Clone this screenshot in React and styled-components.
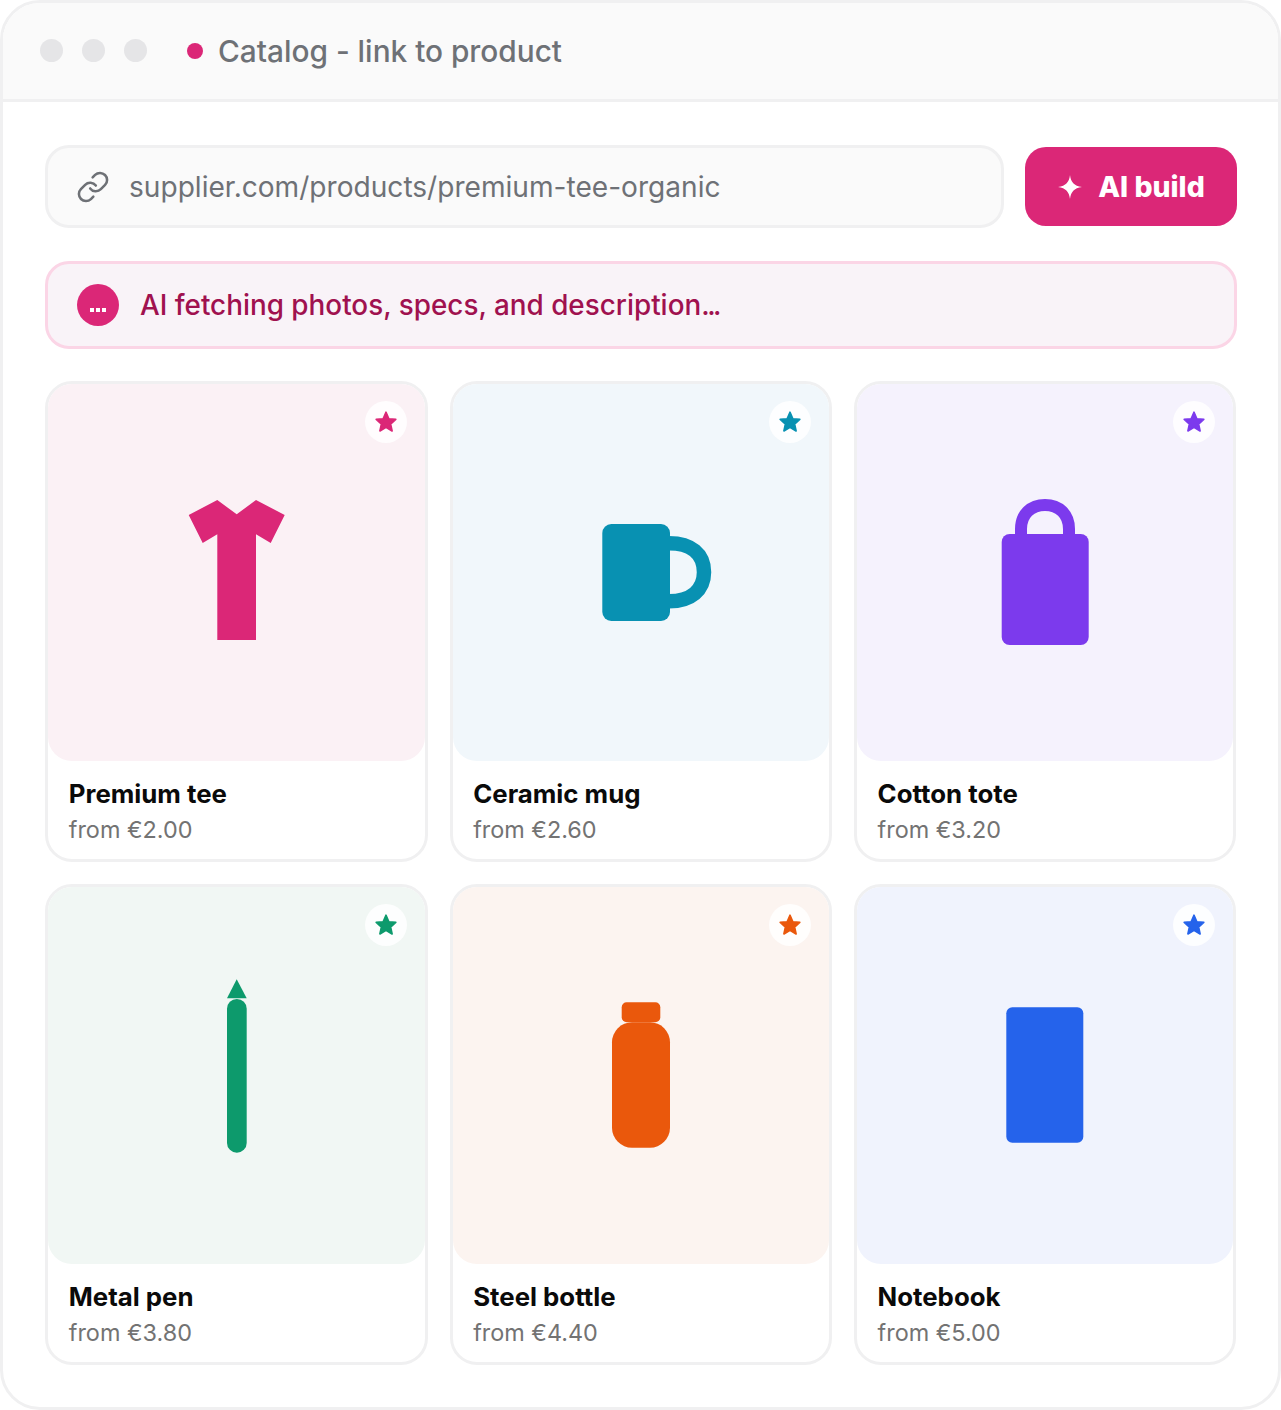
import React from 'react';
import styled, { createGlobalStyle } from 'styled-components';
import { Link } from 'lucide-react';

const PINK = '#db2777';
const LINE = '#f0f0f1';

const GlobalStyle = createGlobalStyle`
  html, body {
    margin: 0;
    padding: 0;
    background: #fff;
  }
  * {
    box-sizing: border-box;
  }
  body {
    font-family: Inter, "Liberation Sans", sans-serif;
  }
`;

const Window = styled.div`
  width: 1281px;
  height: 1410px;
  border: 3px solid ${LINE};
  border-radius: 40px;
  background: #fff;
  overflow: hidden;
`;

const TitleBar = styled.header`
  height: 99px;
  display: flex;
  align-items: center;
  padding: 0 0 1px 37px;
  background: #fafafa;
  border-bottom: 3px solid ${LINE};
`;

const WindowDot = styled.span`
  width: 23px;
  height: 23px;
  margin-right: 19px;
  border-radius: 50%;
  background: #e5e5e7;
`;

const LiveDot = styled.span`
  width: 16px;
  height: 16px;
  margin: 0 15.5px 0 20.5px;
  border-radius: 50%;
  background: ${PINK};
`;

const WindowTitle = styled.span`
  font-size: 29.8px;
  font-weight: 500;
  color: #6e7176;
`;

const Content = styled.main`
  padding: 43px 41px 0 42.3px;
`;

const UrlRow = styled.div`
  display: flex;
  align-items: center;
  gap: 21px;
`;

const UrlField = styled.div`
  flex: 1;
  height: 83px;
  display: flex;
  align-items: center;
  gap: 18.7px;
  padding-left: 28px;
  background: #fafafa;
  border: 3px solid ${LINE};
  border-radius: 24px;
  font-size: 28.1px;
  color: #6e7176;
  svg {
    flex: none;
  }
`;

const BuildButton = styled.button`
  width: 212px;
  height: 79px;
  display: flex;
  align-items: center;
  justify-content: center;
  gap: 16px;
  padding: 0 0 0 1px;
  border: none;
  border-radius: 21px;
  background: ${PINK};
  color: #fff;
  font-family: inherit;
  font-size: 28.4px;
  font-weight: 800;
`;

const Banner = styled.div`
  height: 88px;
  margin-top: 33px;
  display: flex;
  align-items: center;
  gap: 21px;
  padding-left: 28.7px;
  background: #f9f3f8;
  border: 3px solid #fbd5e6;
  border-radius: 24px;
  font-size: 27.85px;
  font-weight: 500;
  color: #a0114f;
`;

const BannerBadge = styled.span`
  width: 42px;
  height: 42px;
  display: flex;
  align-items: center;
  justify-content: center;
  gap: 2px;
  padding-top: 10px;
  border-radius: 50%;
  background: ${PINK};
`;

const BannerDot = styled.i`
  width: 4px;
  height: 4px;
  background: #fff;
`;

const Ellipsis = styled.span`
  letter-spacing: -2.5px;
`;

const Grid = styled.div`
  margin-top: 32px;
  display: grid;
  grid-template-columns: repeat(3, 382.4px);
  gap: 22px;
`;

const Card = styled.article`
  height: 481px;
  display: flex;
  flex-direction: column;
  background: #fff;
  border: 3px solid ${LINE};
  border-radius: 27px;
`;

const Picture = styled.div`
  position: relative;
  height: 377px;
  flex: none;
  display: flex;
  align-items: center;
  justify-content: center;
  padding-bottom: 2px;
  border-radius: 24px;
  background: ${props => props.$tint};
`;

const Favourite = styled.span`
  position: absolute;
  top: 17px;
  right: 18px;
  width: 42px;
  height: 42px;
  display: flex;
  align-items: center;
  justify-content: center;
  border-radius: 50%;
  background: rgba(255, 255, 255, .85);
`;

const Info = styled.div`
  padding: 16px 20.5px 0;
`;

const Name = styled.div`
  font-size: 25.8px;
  line-height: 34px;
  font-weight: 650;
  color: #0a0a0a;
`;

const Price = styled.div`
  margin-top: 4px;
  font-size: 23.4px;
  line-height: 30px;
  color: #737373;
`;

const Star = ({ color }) => (
  <svg width="26" height="26" viewBox="0 0 24 24">
    <polygon
      points="12,3 14.6,9 21,9.6 16.2,13.9 17.6,20.2 12,16.9 6.4,20.2 7.8,13.9 3,9.6 9.4,9"
      fill={color}
      stroke={color}
      strokeWidth="1.6"
      strokeLinejoin="round"
    />
  </svg>
);

const Sparkle = () => (
  <svg width="24" height="24" viewBox="0 0 24 24">
    <path d="M12 0 C12.8 7 16 11 24 12 C16 13 12.8 17 12 24 C11.2 17 8 13 0 12 C8 11 11.2 7 12 0 Z" fill="#fff" />
  </svg>
);

// every product drawing is a 200 box centred in the picture
const Drawing = ({ children }) => (
  <svg width="200" height="200" viewBox="0 0 200 200">{children}</svg>
);

const products = [
  {
    name: 'Premium tee',
    price: 'from €2.00',
    color: PINK,
    tint: '#fbf1f5',
    art: c => (
      <polygon
        fill={c}
        points="81.3,28 100.7,42.3 120,28 148.7,43 134.7,71 120,62.3 120,168 81.3,168 81.3,62.3 66.7,71 52.7,43"
      />
    ),
  },
  {
    name: 'Ceramic mug',
    price: 'from €2.60',
    color: '#0891b2',
    tint: '#f1f7fb',
    art: c => (
      <>
        <rect x="61.3" y="52" width="67.7" height="97" rx="9" fill={c} />
        <path
          d="M128 71.3 C150 71.3 163 82 163 100.3 C163 118 150 129.3 128 129.3"
          fill="none"
          stroke={c}
          strokeWidth="14.5"
        />
      </>
    ),
  },
  {
    name: 'Cotton tote',
    price: 'from €3.20',
    color: '#7c3aed',
    tint: '#f5f2fd',
    art: c => (
      <>
        <rect x="56.7" y="62" width="87" height="111" rx="8" fill={c} />
        <path
          d="M76 63 V57 C76 42 86 33 100 33 C114 33 124 42 124 57 V63"
          fill="none"
          stroke={c}
          strokeWidth="12"
        />
      </>
    ),
  },
  {
    name: 'Metal pen',
    price: 'from €3.80',
    color: '#0d9a6c',
    tint: '#f1f7f4',
    art: c => (
      <>
        <polygon points="100.7,4.3 110.7,23.3 91,23.3" fill={c} />
        <rect x="91" y="24" width="19.7" height="153.7" rx="9.8" fill={c} />
      </>
    ),
  },
  {
    name: 'Steel bottle',
    price: 'from €4.40',
    color: '#ea580c',
    tint: '#fcf4f0',
    art: c => (
      <>
        <rect x="80.7" y="27.3" width="38.6" height="20" rx="5" fill={c} />
        <rect x="71" y="47.3" width="58" height="125.4" rx="20" fill={c} />
      </>
    ),
  },
  {
    name: 'Notebook',
    price: 'from €5.00',
    color: '#2563eb',
    tint: '#f0f3fd',
    art: c => <rect x="61.3" y="32.3" width="77" height="135.4" rx="6" fill={c} />,
  },
];

const App = () => (
  <>
    <GlobalStyle />
    <Window>
      <TitleBar>
        <WindowDot />
        <WindowDot />
        <WindowDot />
        <LiveDot />
        <WindowTitle>Catalog - link to product</WindowTitle>
      </TitleBar>
      <Content>
        <UrlRow>
          <UrlField>
            <Link size={34} strokeWidth={1.8} color="#6e7176" />
            supplier.com/products/premium-tee-organic
          </UrlField>
          <BuildButton>
            <Sparkle />
            AI build
          </BuildButton>
        </UrlRow>
        <Banner>
          <BannerBadge>
            <BannerDot />
            <BannerDot />
            <BannerDot />
          </BannerBadge>
          <span>AI fetching photos, specs, and description<Ellipsis>...</Ellipsis></span>
        </Banner>
        <Grid>
          {products.map(product => (
            <Card key={product.name}>
              <Picture $tint={product.tint}>
                <Favourite>
                  <Star color={product.color} />
                </Favourite>
                <Drawing>{product.art(product.color)}</Drawing>
              </Picture>
              <Info>
                <Name>{product.name}</Name>
                <Price>{product.price}</Price>
              </Info>
            </Card>
          ))}
        </Grid>
      </Content>
    </Window>
  </>
);

export default App;
